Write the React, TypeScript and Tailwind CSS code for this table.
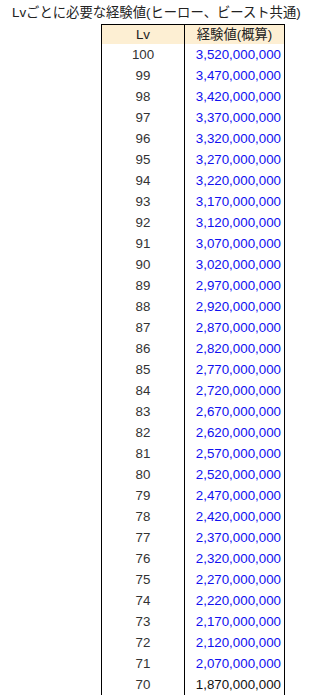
const rows: [number, string][] = [
  [100, '3,520,000,000'],
  [99, '3,470,000,000'],
  [98, '3,420,000,000'],
  [97, '3,370,000,000'],
  [96, '3,320,000,000'],
  [95, '3,270,000,000'],
  [94, '3,220,000,000'],
  [93, '3,170,000,000'],
  [92, '3,120,000,000'],
  [91, '3,070,000,000'],
  [90, '3,020,000,000'],
  [89, '2,970,000,000'],
  [88, '2,920,000,000'],
  [87, '2,870,000,000'],
  [86, '2,820,000,000'],
  [85, '2,770,000,000'],
  [84, '2,720,000,000'],
  [83, '2,670,000,000'],
  [82, '2,620,000,000'],
  [81, '2,570,000,000'],
  [80, '2,520,000,000'],
  [79, '2,470,000,000'],
  [78, '2,420,000,000'],
  [77, '2,370,000,000'],
  [76, '2,320,000,000'],
  [75, '2,270,000,000'],
  [74, '2,220,000,000'],
  [73, '2,170,000,000'],
  [72, '2,120,000,000'],
  [71, '2,070,000,000'],
  [70, '1,870,000,000'],
]

export default function App() {
  return (
    <div className="w-[318px] h-[695px] overflow-hidden bg-white text-[13.33px] text-[#222] font-['Liberation_Sans','Noto_Sans_CJK_JP',sans-serif]">
      <div className="h-[24px] pl-[12px] pt-[5px] leading-[16px] whitespace-nowrap">
        Lvごとに必要な経験値(ヒーロー、ビースト共通)
      </div>
      <div className="ml-[101px] w-[184px] border-x border-t border-black">
        <div className="flex h-[19px] bg-[#fdefd3] leading-[19px]">
          <div className="w-[83px] border-r border-black text-center">Lv</div>
          <div className="flex-1 text-center">経験値(概算)</div>
        </div>
        {rows.map(([lv, exp], i) => (
          <div key={lv} className="flex h-[21px] leading-[21px]">
            <div className="w-[83px] border-r border-black text-center text-[#333]">{lv}</div>
            <div
              className={
                i === rows.length - 1
                  ? 'flex-1 text-right pr-[3px] text-[#111]'
                  : 'flex-1 text-right pr-[3px] text-[#1010f0]'
              }
            >
              {exp}
            </div>
          </div>
        ))}
      </div>
    </div>
  )
}
